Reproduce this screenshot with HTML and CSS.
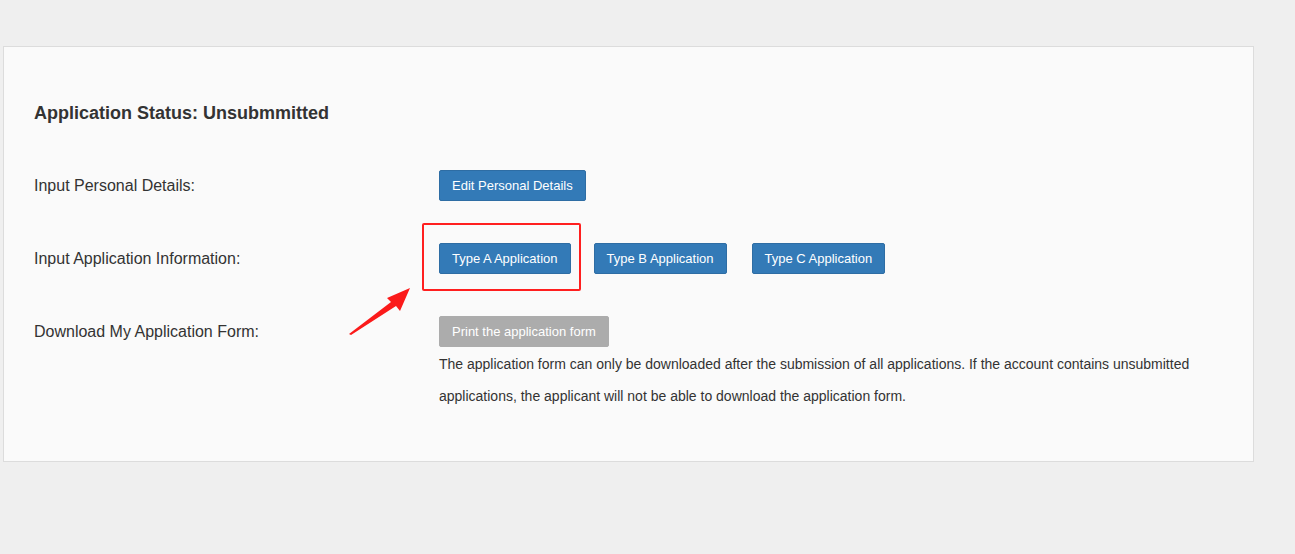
FILE: index.html
```html
<!DOCTYPE html>
<html>
  <head>
    <meta charset="utf-8">
    <link rel="stylesheet" href="styles.css">
  </head>
  <body>

    <div class="panel">
      <h3 class="status-title">Application Status: Unsubmmitted</h3>

      <div class="form-row">
        <div class="row-label">Input Personal Details:</div>
        <div class="row-body">
          <div class="btn-group">
            <a class="btn btn-primary">Edit Personal Details</a>
          </div>
        </div>
      </div>

      <div class="form-row">
        <div class="row-label">Input Application Information:</div>
        <div class="row-body">
          <div class="btn-group">
            <span class="highlight-wrap">
              <a class="btn btn-primary">Type A Application</a>
              <span class="highlight-box"></span>
            </span>
            <a class="btn btn-primary">Type B Application</a>
            <a class="btn btn-primary btn-last">Type C Application</a>
          </div>
        </div>
      </div>

      <div class="form-row">
        <div class="row-label">Download My Application Form:</div>
        <div class="row-body">
          <div class="btn-group">
            <a class="btn btn-disabled">Print the application form</a>
          </div>
          <p class="form-note">The application form can only be downloaded after the submission of all applications. If the account contains unsubmitted applications, the applicant will not be able to download the application form.</p>
        </div>
      </div>

      <!-- annotation arrow -->
      <svg class="note-arrow" width="64" height="54" viewBox="0 0 64 54">
        <polygon points="1,50 43,18 39,14 62,4 52,27 48,22 3,51" fill="#fb1a1a"/>
      </svg>
    </div>

  </body>
</html>
```

FILE: styles.css
```css
html, body {
  height: 100%;
}
body {
  --blue: #337ab7;
  --blue-border: #2e6da4;
  --text: #333;

  margin: 0;
  background-color: #efefef;
  font-family: "Liberation Sans", Arial, sans-serif;
  color: var(--text);
}

.panel {
  position: relative;
  box-sizing: border-box;
  width: 1251px;
  height: 416px;
  margin: 46px 0 0 3px;
  padding: 56px 30px 49px 30px;
  background-color: #fafafa;
  border: 1px solid #dcdcdc;
}

.status-title {
  margin: 0 0 47px 0;
  font-size: 18px;
  line-height: 20px;
  font-weight: bold;
}

.form-row {
  display: grid;
  grid-template-columns: 405px 1fr;
  margin-bottom: 42px;
}
.form-row:last-of-type {
  margin-bottom: 0;
}

.row-label {
  font-size: 16px;
  line-height: 31px;
}

.btn-group {
  display: flex;
  gap: 23px;
}

.highlight-wrap {
  position: relative;
  display: flex;
}

.highlight-box {
  position: absolute;
  left: -17px;
  top: -20px;
  right: -10px;
  bottom: -17px;
  border: 2px solid #ff1f1f;
  border-radius: 2px;
}

.btn {
  display: inline-block;
  padding: 6px 12px;
  font-size: 13px;
  line-height: 17px;
  border: 1px solid transparent;
  border-radius: 2px;
  color: #fff;
  white-space: nowrap;
}
.btn-primary {
  background-color: var(--blue);
  border-color: var(--blue-border);
}
.btn-last {
  margin-left: 2px;
}
.btn-disabled {
  background-color: #acacac;
  border-color: #acacac;
}

.form-note {
  margin: 1px 0 0 0;
  font-size: 14px;
  line-height: 32px;
}

.note-arrow {
  position: absolute;
  left: 344px;
  top: 237px;
}
```
